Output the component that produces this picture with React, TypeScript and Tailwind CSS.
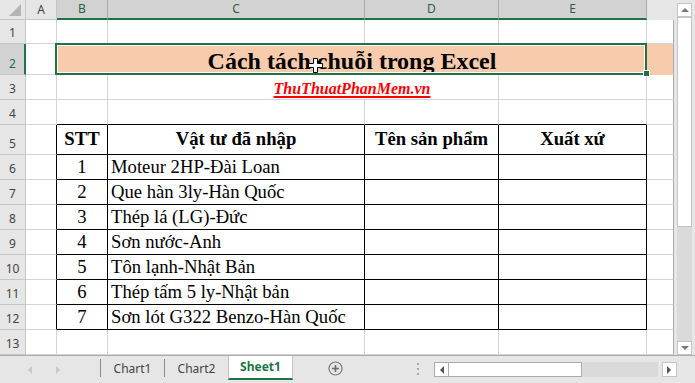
import React from "react";

const items = [
  "Moteur 2HP-Đài Loan",
  "Que hàn 3ly-Hàn Quốc",
  "Thép lá (LG)-Đức",
  "Sơn nước-Anh",
  "Tôn lạnh-Nhật Bản",
  "Thép tấm 5 ly-Nhật bản",
  "Sơn lót G322 Benzo-Hàn Quốc",
];

const grid = "border-b border-r border-[#d4d4d4]";
const fCol = "border-b border-r border-b-[#d4d4d4] border-r-[#ababab]";

const RowHead = ({ n, sel }: { n: number; sel?: boolean }) => (
  <div
    className={
      sel
        ? "flex items-end justify-center border-b border-r-2 border-b-[#c6c6c6] border-r-[#217346] bg-[#d2d2d2] pb-[4px] pl-[1px] leading-none text-[#217346]"
        : "flex items-end justify-center border-b border-r border-[#c6c6c6] bg-[#e6e6e6] pb-[4px] leading-none text-[#444]"
    }
  >
    {n}
  </div>
);

const Arrow = ({ dir, color }: { dir: "l" | "r" | "u" | "d"; color: string }) => {
  const pts = {
    l: "5,0 5,8 1,4",
    r: "0,0 0,8 4,4",
    u: "0,5 8,5 4,1",
    d: "0,1 8,1 4,5",
  }[dir];
  const big = dir === "l" || dir === "r";
  return (
    <svg width={big ? 5 : 8} height={big ? 8 : 6} viewBox={big ? "0 0 5 8" : "0 0 8 6"}>
      <polygon points={pts} fill={color} />
    </svg>
  );
};

const App = () => {
  return (
    <div className="relative h-[383px] w-[695px] overflow-hidden bg-white font-['Noto_Sans',sans-serif] text-[12px]">
      <div className="flex h-[355px]">
        {/* sheet grid */}
        <div className="grid w-[674px] grid-cols-[26px_31px_51px_257px_134px_148px_27px] grid-rows-[20px_24px_31px_25px_25px_30px_repeat(7,25px)_25px]">
          {/* column headers */}
          <div className="relative border-b border-r border-[#c6c6c6] bg-[#e6e6e6]">
            <svg className="absolute bottom-[3px] right-[4px]" width="12" height="12" viewBox="0 0 12 12">
              <polygon points="12,0 12,12 0,12" fill="#b4b4b4" />
            </svg>
          </div>
          <div className="flex items-center justify-center border-b border-r border-[#c6c6c6] bg-[#e6e6e6] text-[#444]">A</div>
          {["B", "C", "D", "E"].map((l) => (
            <div
              key={l}
              className="flex items-center justify-center border-b-2 border-r border-b-[#217346] border-r-[#ababab] bg-[#d2d2d2] text-[#2b5f3f]"
            >
              {l}
            </div>
          ))}
          <div className="bg-[#e6e6e6]" />

          {/* row 1 */}
          <RowHead n={1} />
          <div className={grid} />
          <div className={grid} />
          <div className={grid} />
          <div className={grid} />
          <div className={grid} />
          <div className={fCol} />

          {/* row 2 - title */}
          <RowHead n={2} sel />
          <div className={grid} />
          <div className="relative col-span-4 flex items-center justify-center bg-[#f8cbad] pt-[2px] font-['Liberation_Serif','Times_New_Roman',serif] text-[24px] font-bold leading-none text-black">
            Cách tách chuỗi trong Excel
            <div className="absolute -left-[2px] -top-px bottom-0 right-0 border-2 border-[#217346]">
              <div className="h-full w-full border border-white" />
            </div>
            <div className="absolute -bottom-[2px] -right-[3px] h-[7px] w-[7px] border border-white bg-[#217346]" />
          </div>
          <div className="border-b border-r border-b-[#f8cbad] border-r-[#ababab] bg-[#f8cbad]" />

          {/* row 3 - watermark */}
          <RowHead n={3} />
          <div className={grid} />
          <div className={grid} />
          <div className="col-span-2 flex items-end justify-center border-b border-r border-[#d4d4d4] pb-[2px] pl-[98px] font-['Liberation_Serif','Times_New_Roman',serif] text-[16px] font-bold italic leading-none text-[#ff0000]">
            <span className="underline decoration-[1.5px] underline-offset-[2px]">ThuThuatPhanMem.vn</span>
          </div>
          <div className={grid} />
          <div className={fCol} />

          {/* row 4 */}
          <RowHead n={4} />
          <div className={grid} />
          <div className="border-b border-r border-b-black border-r-[#d4d4d4]" />
          <div className="border-b border-r border-b-black border-r-[#d4d4d4]" />
          <div className="border-b border-r border-b-black border-r-[#d4d4d4]" />
          <div className="border-b border-r border-b-black border-r-[#d4d4d4]" />
          <div className={fCol} />

          {/* row 5 - table header */}
          <RowHead n={5} />
          <div className="border-b border-r border-b-[#d4d4d4] border-r-black" />
          {["STT", "Vật tư đã nhập", "Tên sản phẩm", "Xuất xứ"].map((h) => (
            <div
              key={h}
              className="flex items-center justify-center border-b border-r border-black font-['Liberation_Serif','Times_New_Roman',serif] text-[18.67px] font-bold leading-none text-black"
            >
              {h}
            </div>
          ))}
          <div className={fCol} />

          {/* rows 6-12 */}
          {items.map((it, i) => (
            <React.Fragment key={it}>
              <RowHead n={i + 6} />
              <div className="border-b border-r border-b-[#d4d4d4] border-r-black" />
              <div className="flex items-end justify-center border-b border-r border-black pb-[2px] font-['Liberation_Serif','Times_New_Roman',serif] text-[18.67px] leading-none text-black">
                {i + 1}
              </div>
              <div className="flex items-end whitespace-nowrap border-b border-r border-black pb-[2px] pl-[3px] font-['Liberation_Serif','Times_New_Roman',serif] text-[18.67px] leading-none text-black">
                {it}
              </div>
              <div className="border-b border-r border-black" />
              <div className="border-b border-r border-black" />
              <div className={fCol} />
            </React.Fragment>
          ))}

          {/* row 13 */}
          <RowHead n={13} />
          <div className={grid} />
          <div className={grid} />
          <div className={grid} />
          <div className={grid} />
          <div className={grid} />
          <div className={fCol} />
        </div>

        {/* vertical scrollbar */}
        <div className="flex w-[21px] flex-col bg-[#e6e6e6] pl-[3px] pt-[3px]">
          <div className="flex h-[14px] w-[15px] items-center justify-center border border-[#c6c6c6] bg-white">
            <Arrow dir="u" color="#777" />
          </div>
          <div className="h-[210px] w-[15px] border border-[#c6c6c6] bg-white" />
          <div className="w-[15px] flex-1 bg-[#dadada]" />
          <div className="flex h-[14px] w-[15px] items-center justify-center border border-[#c6c6c6] bg-white">
            <Arrow dir="d" color="#777" />
          </div>
        </div>
      </div>

      {/* sheet tabs */}
      <div className="flex h-[28px] w-[695px] border-t border-[#ababab] bg-[#e6e6e6] text-[#444]">
        <div className="flex w-[100px] items-center gap-[24px] pl-[27px]">
          <Arrow dir="l" color="#c8c8c8" />
          <Arrow dir="r" color="#c8c8c8" />
        </div>
        <div className="mt-[3px] h-[18px] w-px bg-[#8a8a8a]" />
        <div className="flex w-[63px] items-center justify-center pb-[2px]">Chart1</div>
        <div className="mt-[3px] h-[18px] w-px bg-[#8a8a8a]" />
        <div className="flex w-[63px] items-center justify-center pb-[2px]">Chart2</div>
        <div className="flex h-[24px] w-[65px] items-center justify-center border-x border-b-2 border-x-[#c6c6c6] border-b-[#217346] bg-white font-bold text-[#217346]">
          Sheet1
        </div>
        <div className="ml-[35px] flex items-center pb-[2px]">
          <svg width="15" height="15" viewBox="0 0 15 15">
            <circle cx="7.5" cy="7.5" r="6.5" fill="none" stroke="#7a7a7a" strokeWidth="1.2" />
            <path d="M7.5 4v7M4 7.5h7" stroke="#6a6a6a" strokeWidth="1.6" />
          </svg>
        </div>
        <div className="ml-[74px] flex flex-col justify-center gap-[3px] pb-[2px]">
          <div className="h-[2px] w-[2px] bg-[#a8a8a8]" />
          <div className="h-[2px] w-[2px] bg-[#a8a8a8]" />
          <div className="h-[2px] w-[2px] bg-[#a8a8a8]" />
        </div>
        <div className="ml-[15px] mt-[6px] flex h-[15px]">
          <div className="flex w-[15px] items-center justify-center border border-[#ababab] bg-white">
            <Arrow dir="l" color="#555" />
          </div>
          <div className="w-[133px] border-y border-r border-[#ababab] bg-white" />
          <div className="w-[76px] bg-[#dadada]" />
          <div className="ml-[4px] flex w-[15px] items-center justify-center border border-[#c6c6c6] bg-white">
            <Arrow dir="r" color="#555" />
          </div>
        </div>
      </div>

      {/* mouse cursor */}
      <svg className="absolute left-[308px] top-[58px]" width="15" height="15" viewBox="0 0 15 15">
        <polygon
          points="5.5,0.5 9.5,0.5 9.5,5.5 14.5,5.5 14.5,9.5 9.5,9.5 9.5,14.5 5.5,14.5 5.5,9.5 0.5,9.5 0.5,5.5 5.5,5.5"
          fill="#fff"
          stroke="#000"
          strokeWidth="1"
        />
      </svg>
    </div>
  );
};

export default App;
